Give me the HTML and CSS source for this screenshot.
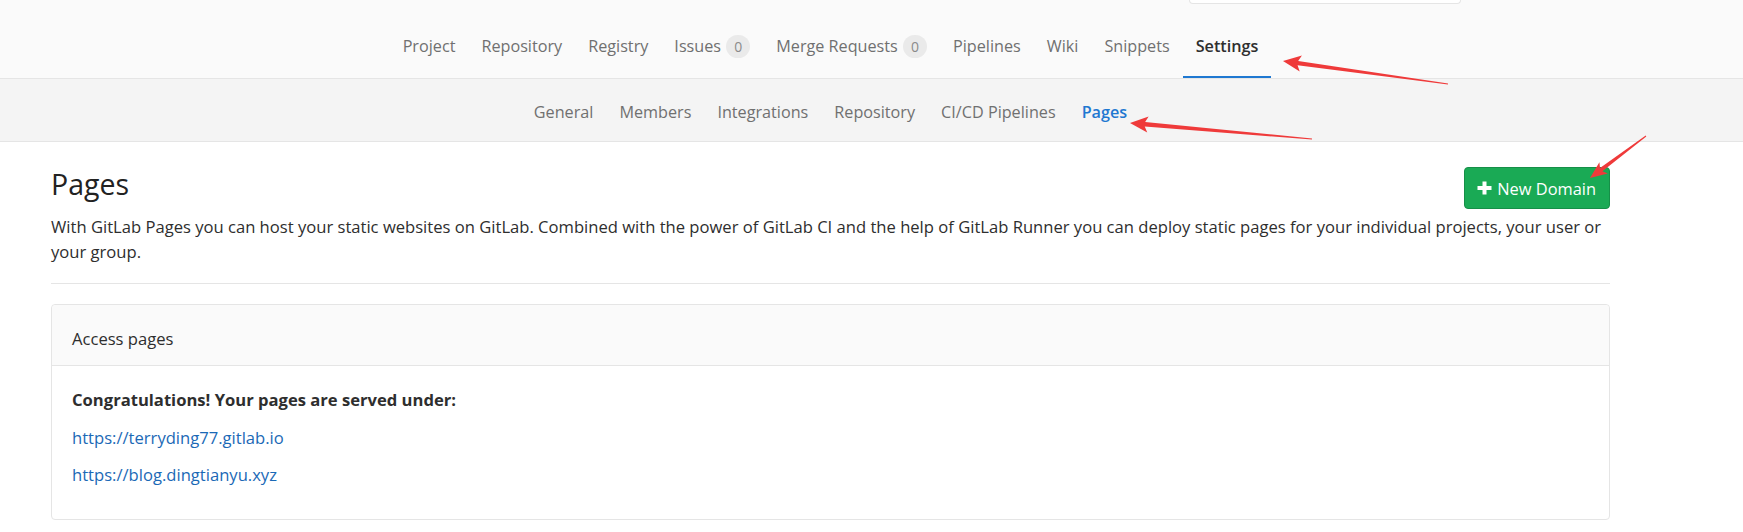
FILE: index.html
```html
<!DOCTYPE html>
<html lang="en">
<head>
<meta charset="utf-8">
<title>Pages · Settings</title>
<link rel="stylesheet" href="styles.css">
</head>
<body>
<header class="topnav">
  <div class="search-stub"></div>
  <nav class="nav-row">
    <a class="nav-link" href="#">Project</a>
    <a class="nav-link" href="#">Repository</a>
    <a class="nav-link" href="#">Registry</a>
    <a class="nav-link" href="#">Issues <span class="badge">0</span></a>
    <a class="nav-link" href="#">Merge Requests <span class="badge">0</span></a>
    <a class="nav-link" href="#">Pipelines</a>
    <a class="nav-link" href="#">Wiki</a>
    <a class="nav-link" href="#">Snippets</a>
    <a class="nav-link active" href="#">Settings</a>
  </nav>
</header>
<nav class="subnav">
  <a class="sub-link" href="#">General</a>
  <a class="sub-link" href="#">Members</a>
  <a class="sub-link" href="#">Integrations</a>
  <a class="sub-link" href="#">Repository</a>
  <a class="sub-link" href="#">CI/CD Pipelines</a>
  <a class="sub-link active" href="#">Pages</a>
</nav>
<main class="content">
  <div class="title-row">
    <h3 class="page-title">Pages</h3>
    <a class="btn-new" href="#">
      <svg class="plus" viewBox="0 0 15 14" width="15" height="14" aria-hidden="true"><path d="M5.5 0.5h4v4.5h5v4h-5v4.5h-4v-4.5h-5v-4h5z" fill="#fff"/></svg>
      <span>New Domain</span>
    </a>
  </div>
  <p class="lead">With GitLab Pages you can host your static websites on GitLab. Combined with the power of GitLab CI and the help of GitLab Runner you can deploy static pages for your individual projects, your user or your group.</p>
  <hr class="divider">
  <section class="card">
    <div class="card-header">Access pages</div>
    <div class="card-body">
      <p><strong>Congratulations! Your pages are served under:</strong></p>
      <p><a href="#">https://terryding77.gitlab.io</a></p>
      <p><a href="#">https://blog.dingtianyu.xyz</a></p>
    </div>
  </section>
</main>
<svg class="annotations" width="1743" height="532" viewBox="0 0 1743 532" aria-hidden="true">
  <g fill="#ef3a3a">
    <polygon transform="translate(1283 61) rotate(7.94)" points="0,0 18,-8 15,-2.2 166.6,-0.5 166.6,0.5 15,2.2 18,8"/>
    <polygon transform="translate(1130 123) rotate(5.02)" points="0,0 18,-8 15,-2.2 182.7,-0.5 182.7,0.5 15,2.2 18,8"/>
    <polygon transform="translate(1590 178) rotate(-36.87)" points="0,0 17,-7 14,-2 70,-0.5 70,0.5 14,2 17,7"/>
  </g>
</svg>
</body>
</html>
```

FILE: styles.css
```css
* { box-sizing: border-box; }

body {
  margin: 0;
  position: relative;
  font-family: "Open Sans", "Noto Sans", sans-serif;
  font-size: 16.2px;
  line-height: 25px;
  color: #2e2e2e;
  background: #fff;
}

a { text-decoration: none; }

/* top navigation */
.topnav {
  height: 79px;
  background: #fafafa;
  border-bottom: 1px solid #e5e5e5;
  display: flex;
  flex-direction: column;
}

.search-stub {
  margin-left: 1189px;
  width: 272px;
  height: 4px;
  background: #fff;
  border: 1px solid #e5e5e5;
  border-top: 0;
  border-radius: 0 0 4px 4px;
}

.nav-row {
  margin-top: auto;
  display: flex;
  justify-content: center;
  padding: 0 133px 0 51px;
}

.nav-link {
  display: flex;
  align-items: center;
  height: 44px;
  padding: 0 13px 17px;
  border-bottom: 2px solid transparent;
  color: #707070;
  white-space: pre;
}

.nav-link.active {
  color: #2e2e2e;
  font-weight: 600;
  border-bottom-color: #1f78d1;
}

.badge {
  display: inline-block;
  height: 23px;
  line-height: 23px;
  padding: 0 8px;
  margin-left: 1px;
  border-radius: 12px;
  background: #eaeaea;
  color: #8a8a8a;
  font-size: 14px;
}

/* settings sub navigation */
.subnav {
  height: 63px;
  background: #f4f4f4;
  border-bottom: 1px solid #e5e5e5;
  display: flex;
  justify-content: center;
  padding: 21px 133px 0 51px;
}

.sub-link {
  padding: 0 13px;
  color: #707070;
}

.sub-link.active {
  color: #1f78d1;
  font-weight: 600;
}

/* content */
.content {
  padding: 0 133px 0 51px;
  font-size: 16.6px;
}

.title-row {
  display: flex;
  justify-content: space-between;
  align-items: flex-start;
  margin-top: 25px;
}

.page-title {
  margin: 0;
  font-size: 28.5px;
  line-height: 34px;
  font-weight: 400;
  color: #222;
}

.btn-new {
  display: flex;
  align-items: center;
  gap: 5px;
  height: 42px;
  padding: 0 13px 0 12px;
  background: #1aaa55;
  border: 1px solid #168f48;
  border-radius: 4px;
  color: #fff;
  font-size: 16.4px;
}

.plus { flex: none; }

.lead {
  margin: 5px 0 0;
}

.divider {
  margin: 19px 0 20px;
  border: 0;
  border-top: 1px solid #e5e5e5;
}

.card {
  border: 1px solid #e5e5e5;
  border-radius: 4px;
  margin-bottom: 14px;
}

.card-header {
  height: 61px;
  padding: 21px 20px 0;
  background: #fafafa;
  border-bottom: 1px solid #e5e5e5;
  border-radius: 4px 4px 0 0;
}

.card-body {
  padding: 21px 20px 19px;
}

.card-body p {
  margin: 0 0 12.5px;
}

.card-body strong {
  font-weight: 700;
}

.card-body a {
  color: #1b69b6;
}

/* screenshot annotations */
.annotations {
  position: absolute;
  top: 0;
  left: 0;
  pointer-events: none;
}
```
